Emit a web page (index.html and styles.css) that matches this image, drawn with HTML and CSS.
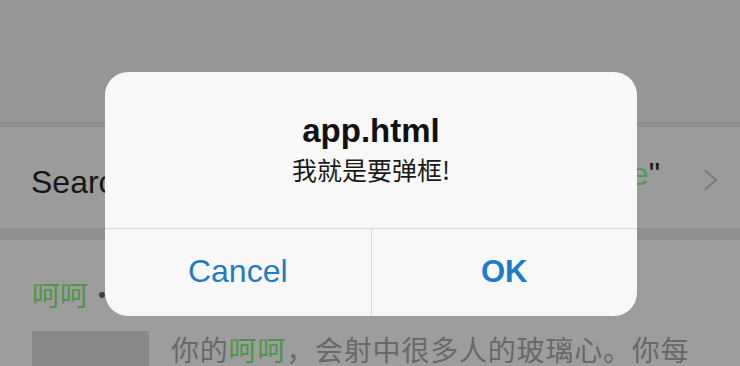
FILE: index.html
```html
<!DOCTYPE html>
<html lang="zh">
<head>
<meta charset="utf-8">
<title>app.html</title>
<link rel="stylesheet" href="styles.css">
</head>
<body>
<div class="page">
  <div class="topbar"></div>
  <div class="sep"></div>
  <div class="search-row">
    <span class="search-text">Search for "呵呵" in Articles, People and More</span>
    <span class="search-end"><span class="green">e</span>"</span>
    <svg class="chev" width="18" height="24" viewBox="0 0 18 24"><path d="M3 2.5 L14 12 L3 21.5" fill="none" stroke="#7a7a7a" stroke-width="2"/></svg>
  </div>
  <div class="sep2"></div>
  <div class="result">
    <div class="result-title"><span class="green">呵呵</span>·</div>
    <div class="result-body">
      <div class="thumb"></div>
      <div class="snippet">你的<span class="green">呵呵</span>，会射中很多人的玻璃心。你每</div>
    </div>
  </div>
</div>
<div class="dialog">
  <div class="dialog-content">
    <div class="dialog-title">app.html</div>
    <div class="dialog-msg">我就是要弹框!</div>
  </div>
  <div class="dialog-actions">
    <div class="btn cancel">Cancel</div>
    <div class="btn ok">OK</div>
  </div>
</div>
</body>
</html>
```
FILE: styles.css
```css
html, body {
  margin: 0;
  padding: 0;
}
body {
  width: 740px;
  height: 366px;
  overflow: hidden;
  position: relative;
  background: #9c9c9c;
  font-family: "Liberation Sans", "Noto Sans CJK SC", sans-serif;
}
.page {
  display: flex;
  flex-direction: column;
  height: 366px;
}
.page > * {
  flex-shrink: 0;
}
.topbar {
  height: 122px;
  background: #969696;
}
.sep {
  height: 5px;
  background: #8e8e8e;
}
.search-row {
  height: 101px;
  background: #9b9b9b;
  display: flex;
  align-items: center;
  padding: 0 20px 0 31px;
}
.search-text {
  font-size: 32px;
  color: #161616;
  white-space: nowrap;
  overflow: hidden;
  width: 300px;
  margin-top: 2px;
}
.search-end {
  margin-left: auto;
  font-size: 32px;
  color: #161616;
  margin-right: 42px;
  margin-top: -6px;
}
.chev {
  margin-top: 4px;
}
.green {
  color: #4f9a4b;
}
.sep2 {
  height: 12px;
  background: #8f8f8f;
}
.result {
  flex: 1 1 auto;
  min-height: 0;
  background: #9d9d9d;
  padding: 39px 0 0 32px;
  display: flex;
  flex-direction: column;
  gap: 22px;
}
.result-title {
  font-family: "Noto Sans CJK SC", sans-serif;
  font-size: 28px;
  line-height: 30px;
  color: #3e3e3e;
}
.result-title .green {
  color: #4d9548;
}
.result-body {
  display: flex;
  gap: 22px;
}
.thumb {
  width: 117px;
  height: 40px;
  background: #888888;
}
.snippet {
  font-family: "Noto Sans CJK SC", sans-serif;
  font-size: 28px;
  line-height: 34px;
  letter-spacing: 0.8px;
  color: #686868;
  white-space: nowrap;
  margin-top: 1px;
}
.snippet .green {
  color: #4d9548;
}
.dialog {
  position: absolute;
  left: 105px;
  top: 72px;
  width: 532px;
  height: 244px;
  background: #f8f8f8;
  border-radius: 23px;
  display: flex;
  flex-direction: column;
  overflow: hidden;
}
.dialog-content {
  height: 157px;
  display: flex;
  flex-direction: column;
  align-items: center;
  padding-top: 40px;
  box-sizing: border-box;
  border-bottom: 1px solid #d9d9d9;
}
.dialog-title {
  font-size: 33px;
  font-weight: bold;
  color: #111;
  line-height: 38px;
}
.dialog-msg {
  font-family: "Noto Sans CJK SC", sans-serif;
  font-size: 25px;
  color: #1a1a1a;
  line-height: 30px;
  margin-top: 4px;
}
.dialog-actions {
  flex: 1;
  display: flex;
}
.btn {
  flex: 1;
  display: flex;
  align-items: center;
  justify-content: center;
  font-size: 32px;
  color: #1e7bc6;
  padding-bottom: 2px;
}
.cancel {
  border-right: 1px solid #d9d9d9;
}
.ok {
  font-weight: bold;
  font-size: 31px;
}
```
